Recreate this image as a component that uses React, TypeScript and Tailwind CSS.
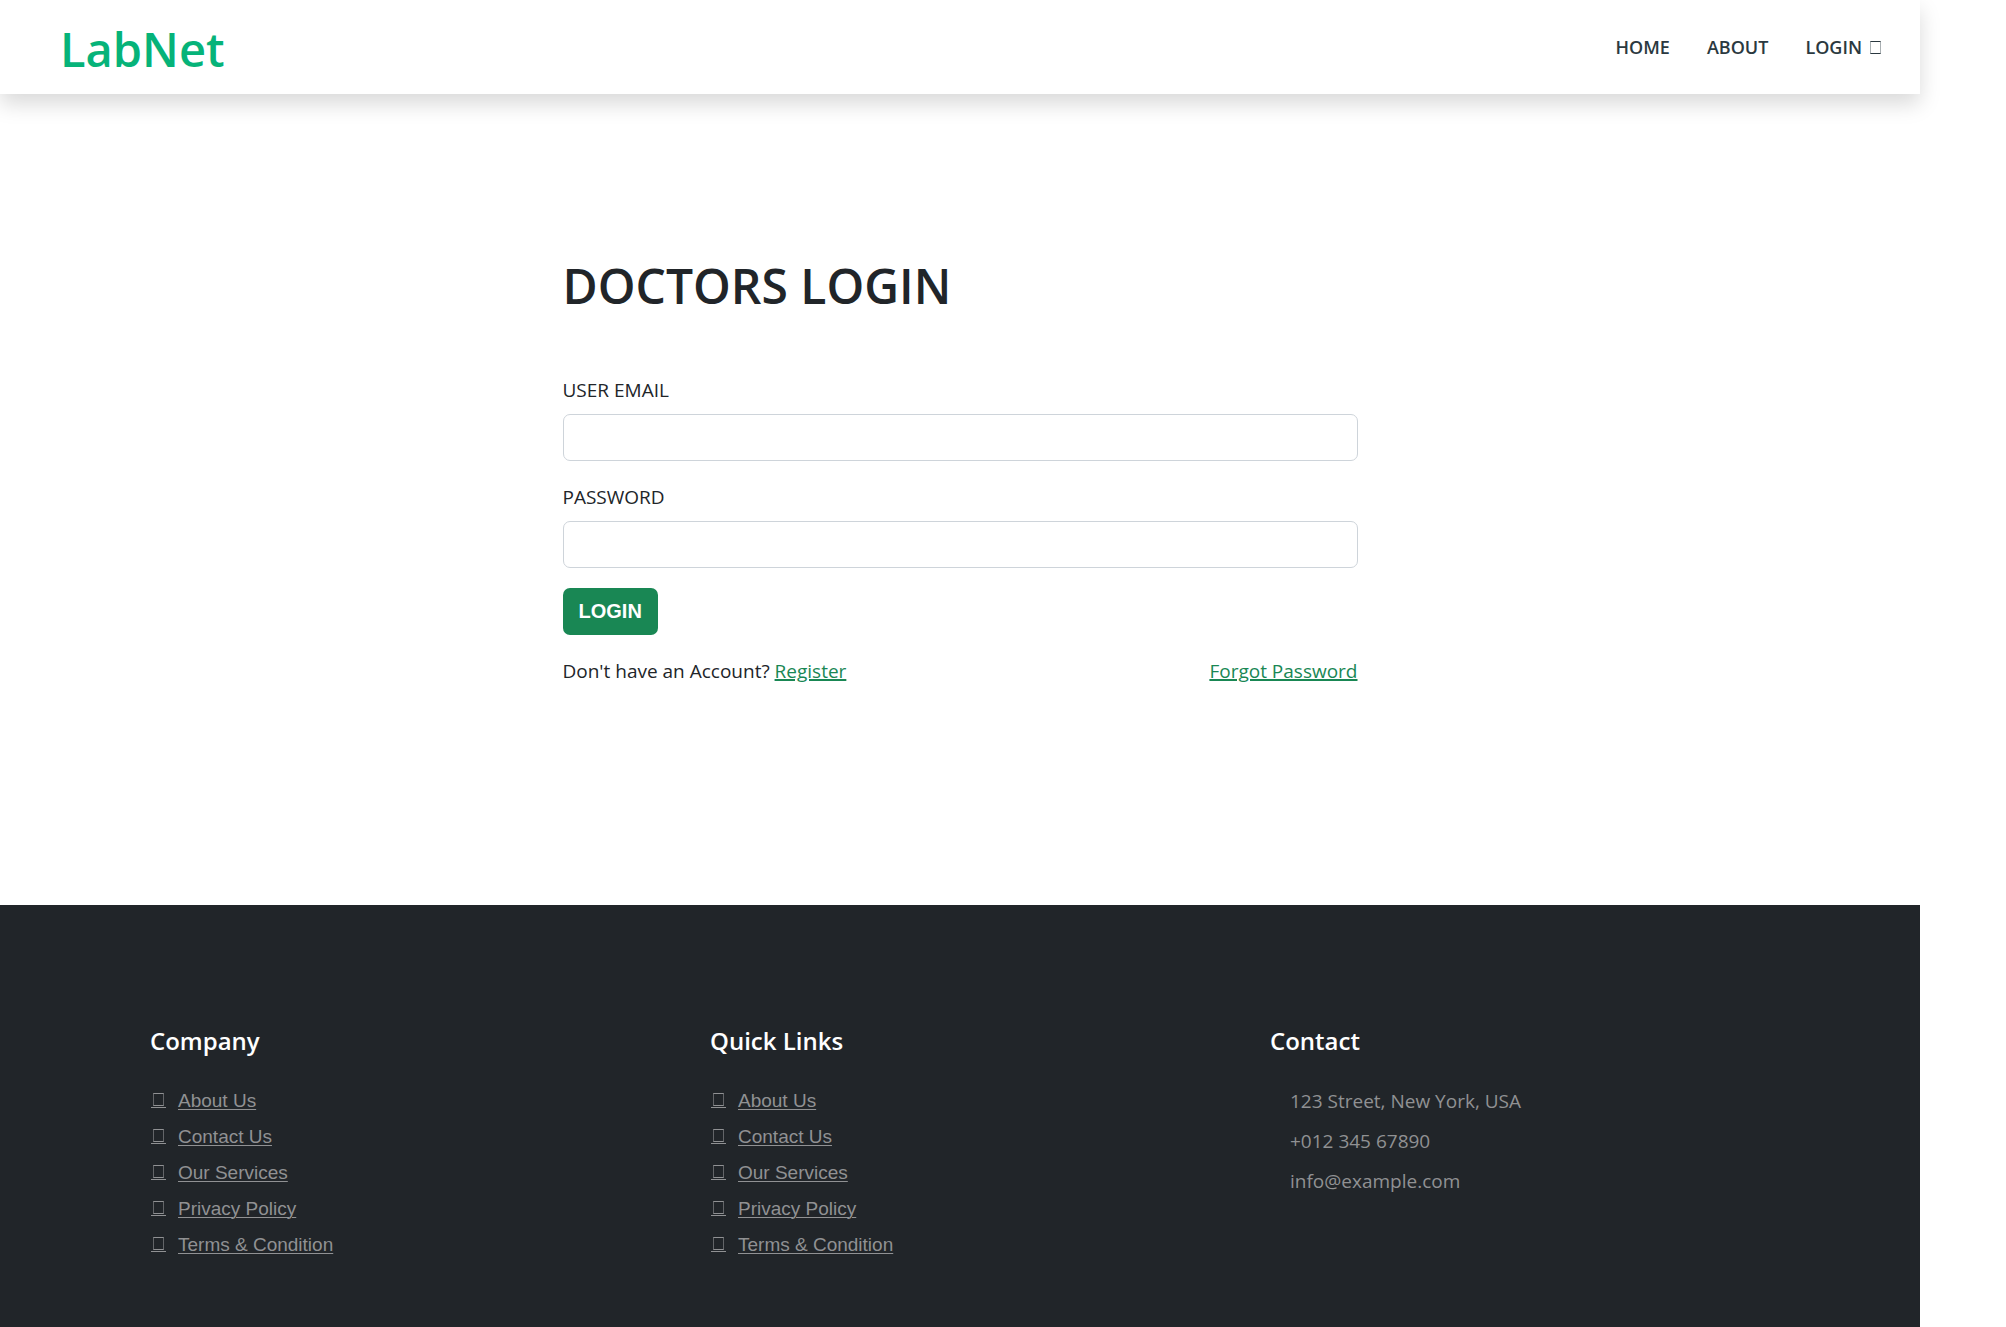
const footerLinks = ["About Us", "Contact Us", "Our Services", "Privacy Policy", "Terms & Condition"];

function LinkColumn({ title }: { title: string }) {
  return (
    <section className="px-[30px]">
      <h2 className="mb-[26px] text-2xl leading-[30px] font-semibold text-white">{title}</h2>
      <ul className="pl-px font-['Liberation_Sans',sans-serif] text-[19px] leading-9">
        {footerLinks.map((label) => (
          <li key={label} className="h-9">
            <a href="#" className="inline-flex items-center text-[#909193]">
              <span className="mr-3 flex h-[15px] w-[15px] justify-center border-b border-current">
                <span className="h-[13px] w-[11px] border border-x-[#909193]/60 border-y-current" />
              </span>
              <span className="underline decoration-1 underline-offset-2">{label}</span>
            </a>
          </li>
        ))}
      </ul>
    </section>
  );
}

function Field({ id, label, type }: { id: string; label: string; type: string }) {
  return (
    <div>
      <label htmlFor={id} className="mb-[9px] block">
        {label}
      </label>
      <input id={id} type={type} className="block h-[47px] w-full rounded-[7px] border border-[#ced4da] bg-white px-4 outline-none" />
    </div>
  );
}

export default function App() {
  return (
    <div className="mr-[86px] font-['Open_Sans',sans-serif] text-[19px] leading-[30px] text-[#212529]">
      <header className="flex h-[94px] items-center justify-between bg-white pr-[39px] pl-[60px] shadow-[0_10px_20px_rgba(0,0,0,0.15)]">
        <a href="#" className="pt-[3px] text-[47px] leading-[60px] font-semibold text-[#06b379]">
          LabNet
        </a>
        <nav className="flex gap-[37px] text-[18px] font-semibold text-[#2b3940]">
          <a href="#">HOME</a>
          <a href="#">ABOUT</a>
          <a href="#" className="flex items-center gap-2">
            LOGIN
            <span className="mt-px h-[13px] w-[11px] border border-x-[#2b3940]/40 border-y-current" />
          </a>
        </nav>
      </header>

      <main className="mx-auto w-[795px] max-w-full pt-[162px] pb-[219px]">
        <h1 className="mb-[59px] text-5xl leading-[60px] font-semibold">DOCTORS LOGIN</h1>
        <form>
          <div className="flex flex-col gap-[21px]">
            <Field id="email" label="USER EMAIL" type="email" />
            <Field id="password" label="PASSWORD" type="password" />
          </div>
          <button type="button" className="mt-5 mb-[21px] block h-[47px] rounded-[7px] bg-[#198754] px-4 pb-[2px] font-['Liberation_Sans',sans-serif] text-xl font-bold text-white">
            LOGIN
          </button>
          <div className="flex justify-between">
            <p>
              Don't have an Account?{" "}
              <a href="#" className="text-[#198754] underline decoration-2">
                Register
              </a>
            </p>
            <a href="#" className="text-[#198754] underline decoration-2">
              Forgot Password
            </a>
          </div>
        </form>
      </main>

      <footer className="grid grid-cols-3 bg-[#212529] px-[120px] pt-[121px] pb-[65px]">
        <LinkColumn title="Company" />
        <LinkColumn title="Quick Links" />
        <section className="px-[30px]">
          <h2 className="mb-[25px] text-2xl leading-[30px] font-semibold text-white">Contact</h2>
          <address className="pl-5 leading-10 text-[#909193] not-italic">
            <p>123 Street, New York, USA</p>
            <p>+012 345 67890</p>
            <p>info@example.com</p>
          </address>
        </section>
      </footer>
    </div>
  );
}
